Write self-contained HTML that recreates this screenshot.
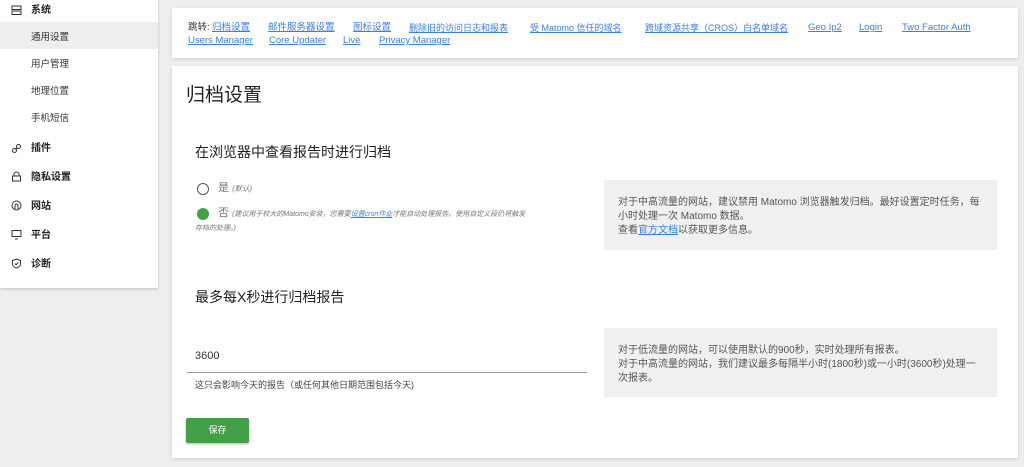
<!DOCTYPE html>
<html><head><meta charset="utf-8"><style>
*{margin:0;padding:0;box-sizing:border-box}
body{width:1024px;height:467px;background:#eeeeee;font-family:"Liberation Sans","Noto Sans CJK SC",sans-serif;position:relative;overflow:hidden;color:#333}
.a{position:absolute;white-space:nowrap;line-height:1.2}
.side{position:absolute;left:0;top:0;width:158px;height:288px;background:#fff;box-shadow:0 1px 3px rgba(0,0,0,.2)}
.card{position:absolute;background:#fff;box-shadow:0 1px 3px rgba(0,0,0,.15)}
.lk{color:#3b80e0;text-decoration:underline;font-size:9.5px;line-height:12px}
.nav{font-size:9.5px;color:#333}
.bold{font-weight:bold;font-size:10px;color:#222}
.box{position:absolute;left:604px;width:393px;background:#f0f0f0;font-size:10px;color:#555;line-height:14px;padding:0 0 0 14px;white-space:nowrap}
</style></head><body>
<div class="side">
  <div class="a" style="left:0;top:22px;width:158px;height:27px;background:#eeeeee"></div>
  <svg class="a" style="left:11px;top:5px" width="11" height="11" viewBox="0 0 11 11"><rect x="1" y="1" width="9" height="3.5" fill="none" stroke="#333"/><rect x="1" y="6" width="9" height="3.5" fill="none" stroke="#333"/></svg>
  <div class="a bold" style="left:31px;top:5px">系统</div>
  <div class="a nav" style="left:31px;top:32px">通用设置</div>
  <div class="a nav" style="left:31px;top:59px">用户管理</div>
  <div class="a nav" style="left:31px;top:86px">地理位置</div>
  <div class="a nav" style="left:31px;top:113px">手机短信</div>
  <svg class="a" style="left:11px;top:143px" width="11" height="11"><circle cx="3.5" cy="7.5" r="2" fill="none" stroke="#333"/><circle cx="7.5" cy="3.5" r="2" fill="none" stroke="#333"/><path d="M4.5 6.5l2-2" stroke="#333"/></svg>
  <div class="a bold" style="left:31px;top:143px">插件</div>
  <svg class="a" style="left:11px;top:171px" width="11" height="11"><rect x="1.5" y="5" width="8" height="5" fill="none" stroke="#333"/><path d="M3 5V3.5a2.5 2.5 0 0 1 5 0V5" fill="none" stroke="#333"/></svg>
  <div class="a bold" style="left:31px;top:172px">隐私设置</div>
  <svg class="a" style="left:11px;top:200px" width="11" height="11"><circle cx="5.5" cy="5.5" r="4.5" fill="none" stroke="#333"/><path d="M4 9V5.5a1.5 1.5 0 0 1 3 0V9" fill="none" stroke="#333"/></svg>
  <div class="a bold" style="left:31px;top:201px">网站</div>
  <svg class="a" style="left:11px;top:229px" width="11" height="11"><rect x="1" y="1.5" width="9" height="6" fill="none" stroke="#333"/><path d="M4 10h3" stroke="#333"/></svg>
  <div class="a bold" style="left:31px;top:230px">平台</div>
  <svg class="a" style="left:11px;top:258px" width="11" height="11"><path d="M5.5 1L9.5 2.5V6C9.5 8 7.5 9.5 5.5 10 3.5 9.5 1.5 8 1.5 6V2.5Z" fill="none" stroke="#333"/><path d="M3.8 5.5l1.3 1.3 2.2-2.3" fill="none" stroke="#333"/></svg>
  <div class="a bold" style="left:31px;top:259px">诊断</div>
</div>
<div class="card" style="left:172px;top:8px;width:846px;height:50px"></div>
<div class="a nav" style="left:188px;top:22px;line-height:12px">跳转:</div>
<div class="a lk" style="left:212px;top:22px">归档设置</div>
<div class="a lk" style="left:268px;top:22px">邮件服务器设置</div>
<div class="a lk" style="left:353px;top:22px">图标设置</div>
<div class="a lk" style="left:409px;top:22px;font-size:9px">删除旧的访问日志和报表</div>
<div class="a lk" style="left:530px;top:22px;font-size:9px">受 Matomo 信任的域名</div>
<div class="a lk" style="left:645px;top:22px;font-size:9px">跨域资源共享（CROS）白名单域名</div>
<div class="a lk" style="left:808px;top:22px">Geo Ip2</div>
<div class="a lk" style="left:859px;top:22px">Login</div>
<div class="a lk" style="left:902px;top:22px">Two Factor Auth</div>
<div class="a lk" style="left:188px;top:35px">Users Manager</div>
<div class="a lk" style="left:269px;top:35px">Core Updater</div>
<div class="a lk" style="left:343px;top:35px">Live</div>
<div class="a lk" style="left:379px;top:35px">Privacy Manager</div>

<div class="card" style="left:172px;top:66px;width:846px;height:392px"></div>
<div class="a" style="left:186px;top:85px;font-size:19px;color:#222">归档设置</div>
<div class="a" style="left:195px;top:144px;font-size:14px;color:#222">在浏览器中查看报告时进行归档</div>
<div class="a" style="left:197px;top:183px;width:12px;height:12px;border:1.5px solid #555;border-radius:50%"></div>
<div class="a" style="left:218px;top:182px;font-size:11px;color:#777">是 <i style="font-size:7.5px">(默认)</i></div>
<div class="a" style="left:197px;top:208px;width:12px;height:12px;background:#43a047;border-radius:50%"></div>
<div class="a" style="left:218px;top:207px;font-size:11px;color:#777">否 <i style="font-size:7px">(建议用于较大的Matomo安装，您需要<span style="color:#3b80e0;text-decoration:underline">设置cron作业</span>才能自动处理报告。使用自定义段仍将触发</i></div>
<div class="a" style="left:195px;top:225px;font-size:7px;color:#777;font-style:italic">存档的处理。)</div>
<div class="box" style="top:180px;height:70px;padding-top:16px">对于中高流量的网站，建议禁用 Matomo 浏览器触发归档。最好设置定时任务，每<br>小时处理一次 Matomo 数据。<br>查看<span style="color:#3b80e0;text-decoration:underline">官方文档</span>以获取更多信息。</div>
<div class="a" style="left:195px;top:289px;font-size:14px;color:#222">最多每X秒进行归档报告</div>
<div class="a" style="left:195px;top:350px;font-size:11px;color:#333">3600</div>
<div class="a" style="left:187px;top:372px;width:400px;height:1px;background:#999"></div>
<div class="a" style="left:195px;top:380px;font-size:9px;color:#444">这只会影响今天的报告（或任何其他日期范围包括今天)</div>
<div class="box" style="top:328px;height:69px;padding-top:16px">对于低流量的网站，可以使用默认的900秒，实时处理所有报表。<br>对于中高流量的网站，我们建议最多每隔半小时(1800秒)或一小时(3600秒)处理一<br>次报表。</div>
<div class="a" style="left:186px;top:418px;width:63px;height:25px;background:#43a047;color:#fff;font-size:9px;text-align:center;line-height:25px;border-radius:2px;box-shadow:0 1px 2px rgba(0,0,0,.3)">保存</div>
</body></html>
